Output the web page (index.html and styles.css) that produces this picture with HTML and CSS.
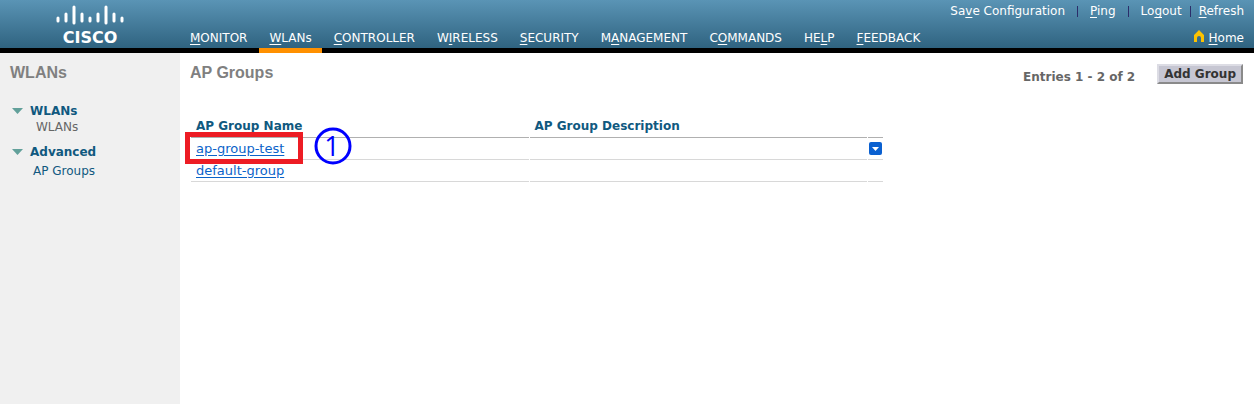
FILE: index.html
```html
<!DOCTYPE html>
<html lang="en">
<head>
<meta charset="utf-8">
<title>AP Groups</title>
<link rel="stylesheet" href="styles.css">
</head>
<body>
<header class="header">
  <div class="logo">
    <svg class="logo-bars" width="68" height="21" viewBox="0 0 68 21" aria-hidden="true">
      <g stroke="#fff" stroke-width="3" stroke-linecap="round">
        <path d="M2 13v3M10 9v7M18 2v16M26 9v7M34 13v3M42 9v7M50 2v16M58 9v7M66 13v3"/>
      </g>
    </svg>
    <span class="logo-name">CISCO</span>
  </div>
  <nav class="nav">
    <a href="#"><u>M</u>ONITOR</a>
    <a href="#" class="active"><u>W</u>LANs</a>
    <a href="#"><u>C</u>ONTROLLER</a>
    <a href="#">W<u>I</u>RELESS</a>
    <a href="#"><u>S</u>ECURITY</a>
    <a href="#">M<u>A</u>NAGEMENT</a>
    <a href="#">C<u>O</u>MMANDS</a>
    <a href="#">HE<u>L</u>P</a>
    <a href="#"><u>F</u>EEDBACK</a>
  </nav>
  <div class="tools">
    <div class="tool-row">
      <a href="#">Sa<u>v</u>e Configuration</a>
      <span class="sep"></span>
      <a href="#"><u>P</u>ing</a>
      <span class="sep"></span>
      <a href="#">Lo<u>g</u>out</a>
      <span class="sep tight"></span>
      <a href="#"><u>R</u>efresh</a>
    </div>
    <a href="#" class="home">
      <svg width="12" height="12" viewBox="0 0 12 12" aria-hidden="true">
        <path d="M6 0L11 5V12H8V8Q8 6 6 6T4 8V12H1V5Z" fill="#fcc200"/>
      </svg>
      <span><u>H</u>ome</span>
    </a>
  </div>
</header>
<div class="page">
  <aside class="sidebar">
    <h2 class="title">WLANs</h2>
    <div class="group">
      <a href="#" class="group-name"><svg width="11" height="6" viewBox="0 0 11 6" aria-hidden="true"><path d="M0 0H11L5.500 6Z" fill="#62a09a"/></svg>WLANs</a>
      <a href="#" class="item">WLANs</a>
    </div>
    <div class="group">
      <a href="#" class="group-name"><svg width="11" height="6" viewBox="0 0 11 6" aria-hidden="true"><path d="M0 0H11L5.500 6Z" fill="#62a09a"/></svg>Advanced</a>
      <a href="#" class="item link">AP Groups</a>
    </div>
  </aside>
  <main class="main">
    <div class="top">
      <h1 class="title">AP Groups</h1>
      <div class="actions">
        <span class="entries">Entries 1 - 2 of 2</span>
        <button type="button" class="add">Add Group</button>
      </div>
    </div>
    <table class="table">
      <thead>
        <tr><th>AP Group Name</th><th>AP Group Description</th><th class="menu"></th></tr>
      </thead>
      <tbody>
        <tr>
          <td class="marked"><a href="#">ap-group-test</a>
            <span class="frame"></span>
            <svg class="step" width="38" height="38" viewBox="0 0 38 38" role="img" aria-label="Step 1">
              <circle cx="19" cy="19" r="17" fill="none" stroke="#00f" stroke-width="3"/>
              <text class="step-number" x="18" y="29" text-anchor="middle">1</text>
            </svg>
          </td>
          <td></td>
          <td class="menu">
            <button type="button" class="drop" aria-label="Group menu">
              <svg width="13" height="13" viewBox="0 0 13 13" aria-hidden="true"><path d="M3 5H10L6.500 9Z" fill="#fff"/></svg>
            </button>
          </td>
        </tr>
        <tr><td><a href="#">default-group</a></td><td></td><td class="menu"></td></tr>
      </tbody>
    </table>
  </main>
</div>
</body>
</html>
```
FILE: styles.css
```css
* { box-sizing: border-box; }
body {
  margin: 0;
  min-height: 100vh;
  display: flex;
  flex-direction: column;
  background: #fff;
  font: 12px/16px Verdana, "DejaVu Sans", sans-serif;
}
a { color: inherit; text-decoration: none; }
u { text-underline-offset: 2px; }
.header {
  display: flex;
  height: 53px;
  border-bottom: 5px solid #000;
  background: linear-gradient(#5a94b5, #2f6380);
  color: #fff;
}
.logo {
  width: 180px;
  padding-top: 5px;
  display: flex;
  flex-direction: column;
  align-items: center;
}
.logo-bars { flex: none; }
.logo-name { font-size: 16px; line-height: 24px; font-weight: bold; }
.nav { display: flex; align-items: flex-end; gap: 2px; height: 53px; }
.nav a {
  padding: 0 10px 2px;
  border-bottom: 5px solid transparent;
  line-height: 16px;
}
.nav .active { border-bottom-color: #ff9000; }
.tools {
  margin-left: auto;
  padding: 3px 10px 0 0;
  display: flex;
  flex-direction: column;
  align-items: flex-end;
  gap: 11px;
}
.tool-row { display: flex; align-items: center; }
.sep { width: 1px; height: 11px; margin: 0 12px; background: #2b2d6a; }
.tight { margin: 0 8px; }
.home { display: flex; gap: 4px; }
.page { display: flex; flex: 1; }
.sidebar { width: 180px; background: #f0f0f0; padding: 10px; color: #666; }
.title {
  margin: 0;
  font: bold 16px/20px "Liberation Sans", Arial, sans-serif;
  color: #808080;
}
.sidebar .title { margin-bottom: 20px; }
.group { margin-bottom: 8px; }
.group-name {
  display: flex;
  gap: 7px;
  align-items: center;
  padding-left: 2px;
  color: #10597f;
  font-weight: bold;
}
.item { display: block; line-height: 17px; padding-left: 26px; }
.link { color: #10597f; padding: 3px 0 0 23px; }
.main { flex: 1; padding: 10px 11px 10px 10px; }
.top { display: flex; justify-content: space-between; height: 52px; }
.actions { display: flex; align-items: flex-start; gap: 22px; }
.entries { font-weight: bold; color: #666; line-height: 28px; }
.add {
  margin-top: 1px;
  height: 20px;
  padding: 0 5px;
  border: 2px solid;
  border-color: #dcdce4 #8a8a8a #8a8a8a #dcdce4;
  background: #c6c6d2;
  color: #333;
  font: bold 12px/16px Verdana, "DejaVu Sans", sans-serif;
}
.table {
  width: 694px;
  max-width: 100%;
  table-layout: fixed;
  border-spacing: 1px 0;
}
.table th, .table td {
  height: 22px;
  padding: 0 5px;
  text-align: left;
  border-bottom: 1px solid #d8d8d8;
}
.table th { height: 23px; color: #10597f; border-bottom-color: #b0b0b0; }
.table .menu { width: 15px; padding: 0 1px; }
.table a {
  color: #0a63c9;
  font-size: 13px;
  text-decoration: underline;
  text-underline-offset: 2px;
}
.table .marked { position: relative; }
.frame {
  position: absolute;
  left: -6px;
  top: -6px;
  width: 118px;
  height: 32px;
  border: 5px solid #ed1c24;
  pointer-events: none;
}
.step { position: absolute; left: 123px; top: -11px; overflow: visible; }
.step-number { font: 27px "Open Sans", sans-serif; fill: #00f; }
.drop {
  display: block;
  width: 13px;
  height: 13px;
  padding: 0;
  border: 0;
  border-radius: 2px;
  background: #0a60d0;
}
.drop svg { display: block; }
```
